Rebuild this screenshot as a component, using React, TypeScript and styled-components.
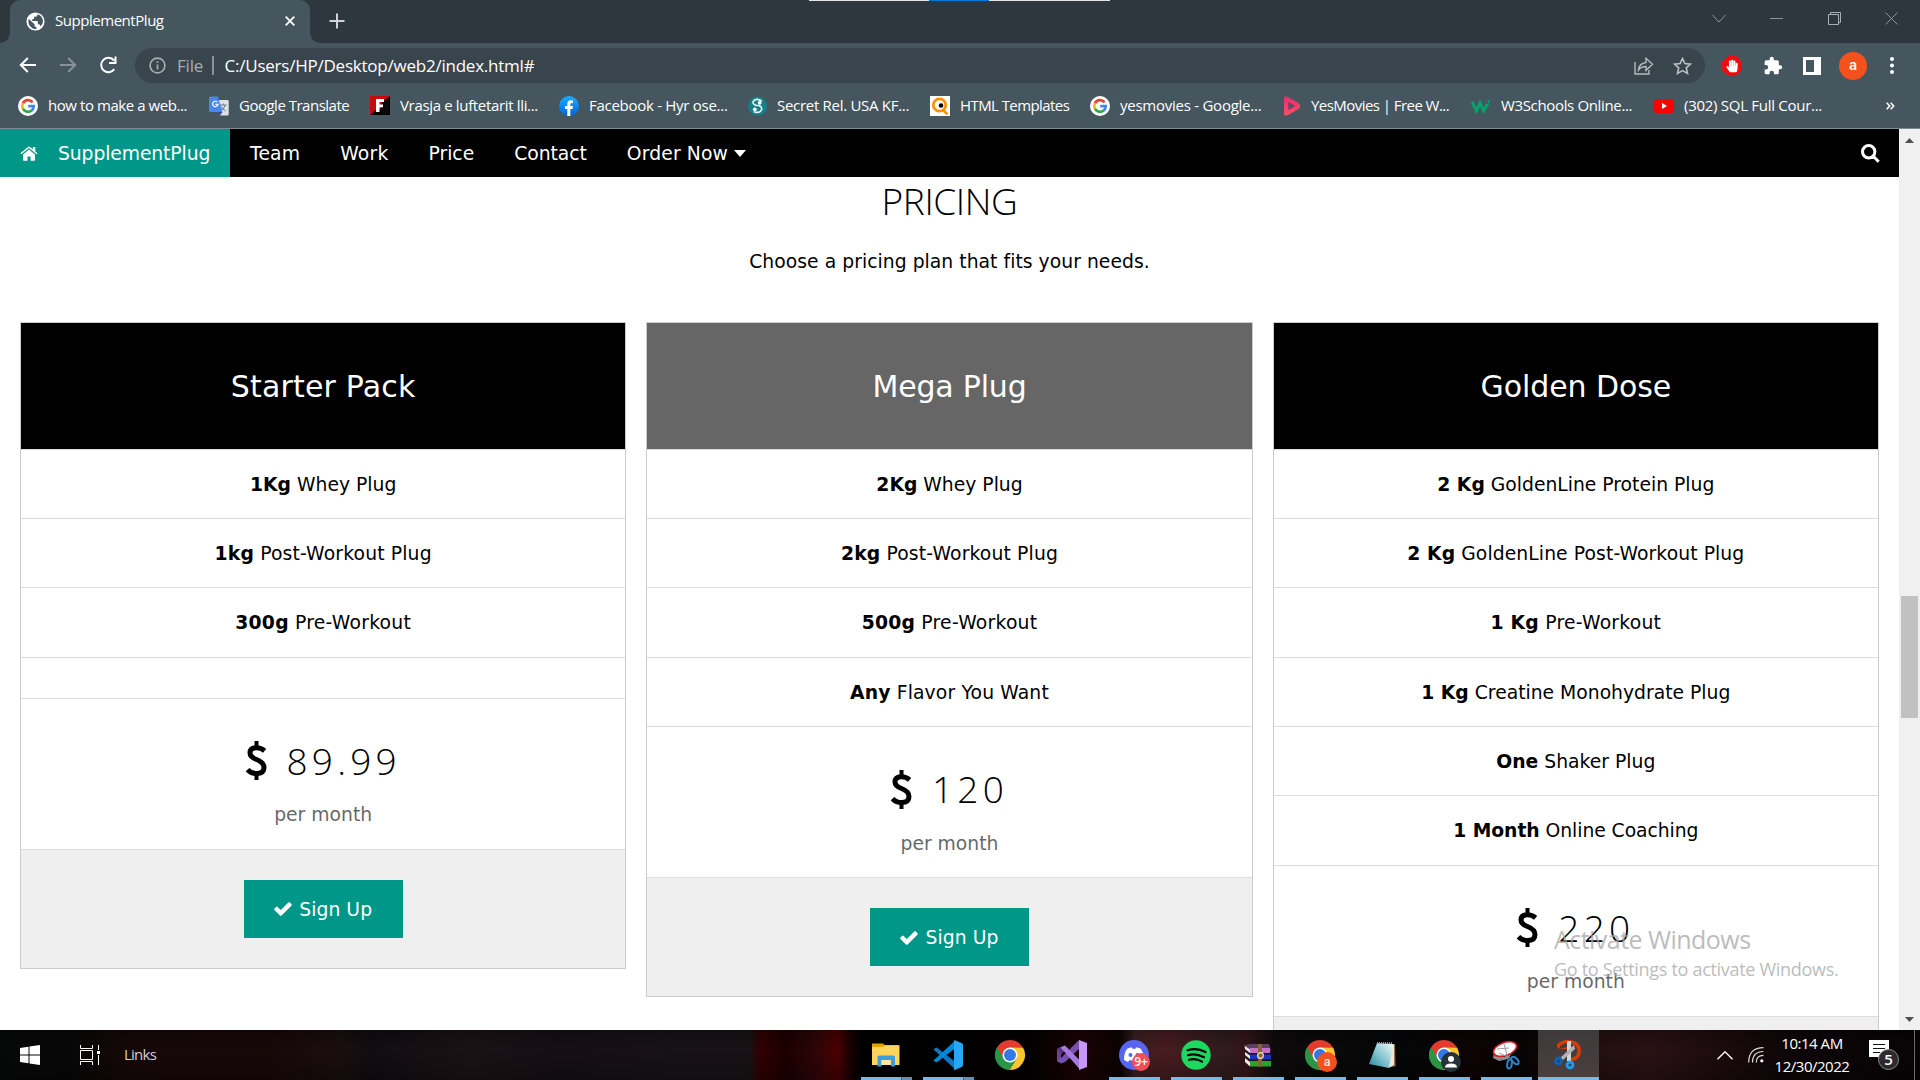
import React from "react";
import styled, { createGlobalStyle } from "styled-components";
import { FaHandPaper } from "react-icons/fa";

const ui = '"Open Sans", "Noto Sans", sans-serif';
const page = '"DejaVu Sans", "Liberation Sans", sans-serif';

const GlobalStyle = createGlobalStyle`
  * { box-sizing: border-box; }
  body { margin: 0; overflow: hidden; background: #fff; font-family: ${ui}; }
  svg { display: block; flex: none; }
`;

const Screen = styled.div`
  position: relative;
  width: 1920px;
  height: 1080px;
  display: flex;
  flex-direction: column;
  overflow: hidden;
`;

/* ---------- browser chrome ---------- */
const TabStrip = styled.div`
  position: relative;
  height: 43px;
  background: #2d373d;
  display: flex;
  flex: none;
`;
const CaptureHint = styled.div`
  position: absolute;
  left: 809px;
  top: 0;
  width: 301px;
  height: 1px;
  background: linear-gradient(90deg, #e3e3e3 120px, #0078d7 120px 180px, #e3e3e3 180px);
`;
const Tab = styled.div`
  position: relative;
  margin-left: 10px;
  width: 300px;
  background: #45565f;
  border-radius: 10px 10px 0 0;
  display: flex;
  align-items: center;
  padding: 0 15px 1px 16px;
  &::before, &::after {
    content: "";
    position: absolute;
    bottom: 0;
    width: 10px;
    height: 10px;
  }
  &::before { left: -10px; background: radial-gradient(circle at 0 0, transparent 9.5px, #45565f 10px); }
  &::after { right: -10px; background: radial-gradient(circle at 100% 0, transparent 9.5px, #45565f 10px); }
`;
const TabTitle = styled.span`
  flex: 1;
  margin-left: 10px;
  padding-bottom: 2px;
  color: #fff;
  font-size: 15px;
  line-height: 20px;
  letter-spacing: -0.46px;
`;
const NewTab = styled.div`
  margin-left: 19px;
  padding-bottom: 1px;
  display: flex;
  align-items: center;
`;
const WindowButtons = styled.div`
  margin-left: auto;
  display: flex;
  height: 37px;
  align-items: center;
`;
const WindowButton = styled.div`
  width: 57.3px;
  display: flex;
  justify-content: center;
`;
const Toolbar = styled.div`
  height: 45px;
  background: #45565f;
  display: flex;
  align-items: center;
  padding: 0 22px 0 19px;
  flex: none;
`;
const NavIcons = styled.div`
  display: flex;
  gap: 22px;
  width: 116px;
  padding-bottom: 1px;
  align-items: center;
`;
const AddressBar = styled.div`
  width: 1570px;
  height: 35px;
  border-radius: 18px;
  background: #39454c;
  display: flex;
  align-items: center;
  padding: 0 13px 0 14px;
  font-size: 17px;
  line-height: 24px;
  color: #fff;
`;
const Scheme = styled.span`
  margin-left: 11px;
  width: 35px;
  color: #a6adb1;
  letter-spacing: -0.2px;
`;
const Divider = styled.i`
  width: 1.5px;
  height: 19px;
  background: #87929a;
  margin-right: 11px;
`;
const Url = styled.span`
  flex: 1;
  letter-spacing: -0.23px;
`;
const AddressActions = styled.div`
  display: flex;
  gap: 19px;
  align-items: center;
`;
const Extensions = styled.div`
  margin-left: 17px;
  display: flex;
  align-items: center;
  flex: 1;
`;
const ExtSlot = styled.div<{ $w: number }>`
  width: ${(p) => p.$w}px;
  display: flex;
`;
const Avatar = styled.div`
  width: 28px;
  height: 28px;
  border-radius: 50%;
  background: #f4511e;
  color: #fff;
  font: 500 15px/27px Roboto, sans-serif;
  text-align: center;
`;
const Bookmarks = styled.div`
  height: 41px;
  background: #45565f;
  border-bottom: 1px solid #7f8b92;
  display: flex;
  align-items: center;
  padding: 0 25px 5px 18px;
  color: #fff;
  font-size: 15px;
  line-height: 20px;
  flex: none;
`;
const Bookmark = styled.div<{ $w: number; $ls: number }>`
  width: ${(p) => p.$w}px;
  display: flex;
  align-items: center;
  gap: 10px;
  white-space: nowrap;
  letter-spacing: ${(p) => p.$ls}px;
`;
const BookmarkText = styled.span`
  padding-bottom: 2px;
`;
const More = styled.span`
  margin-left: auto;
  display: flex;
`;

/* ---------- page ---------- */
const Viewport = styled.div`
  height: 901px;
  display: flex;
  overflow: hidden;
  flex: none;
  font-family: ${page};
`;
const Page = styled.main`
  width: 1899px;
  background: #fff;
`;
const SiteNav = styled.nav`
  height: 48px;
  background: #000;
  display: flex;
  align-items: center;
  color: #fff;
  font-size: 18.75px;
  line-height: 28px;
  padding-right: 19px;
`;
const Brand = styled.a`
  width: 230px;
  height: 48px;
  background: #009688;
  display: flex;
  align-items: center;
  gap: 20px;
  padding-left: 20px;
  letter-spacing: -0.1px;
`;
const NavText = styled.span`
  padding-top: 2px;
`;
const NavLink = styled.a<{ $ls?: number }>`
  display: flex;
  align-items: center;
  gap: 6px;
  padding: 0 20px;
  letter-spacing: ${(p) => p.$ls ?? 0}px;
`;
const Search = styled.div`
  margin-left: auto;
`;
const Section = styled.section`
  text-align: center;
  padding: 0 20px;
`;
const Heading = styled.h2`
  margin: 0;
  padding-top: 1px;
  font: 350 37px/46px ${ui};
  letter-spacing: -0.4px;
`;
const Lead = styled.p`
  margin: 23.5px 0 46.5px;
  font-size: 18.75px;
  line-height: 28px;
  letter-spacing: 0.04px;
`;
const Plans = styled.div`
  display: grid;
  grid-template-columns: repeat(3, 1fr);
  gap: 20px;
  align-items: start;
`;
const Plan = styled.ul`
  list-style: none;
  margin: 0;
  padding: 0;
  border: 1px solid #ccc;
`;
const PlanTitle = styled.li<{ $bg: string; $ls: number }>`
  height: 126.62px;
  padding-top: 2px;
  display: flex;
  align-items: center;
  justify-content: center;
  background: ${(p) => p.$bg};
  border-bottom: 1px solid #ddd;
  color: #fff;
  font-size: 30px;
  letter-spacing: ${(p) => p.$ls}px;
`;
const Feature = styled.li<{ $empty?: boolean; $ls?: number }>`
  height: ${(p) => (p.$empty ? 41.25 : 69.375)}px;
  line-height: 70.4px;
  border-bottom: 1px solid #ddd;
  font-size: 18.75px;
  letter-spacing: ${(p) => p.$ls ?? 0}px;
`;
const PriceItem = styled.li`
  height: 151px;
  padding-top: 35px;
  border-bottom: 1px solid #ddd;
`;
const Price = styled.h2`
  margin: 0 0 13.5px;
  display: flex;
  justify-content: center;
  align-items: center;
  gap: 20px;
  font: 350 37px/54px ${ui};
  letter-spacing: 4.2px;
`;
const Period = styled.div`
  color: #000;
  opacity: 0.6;
  font-size: 18.75px;
  line-height: 28px;
`;
const PlanFooter = styled.li`
  height: 118px;
  padding-top: 30px;
  background: #efefef;
  display: flex;
  justify-content: center;
  align-items: flex-start;
`;
const SignUp = styled.a`
  width: 159px;
  height: 58px;
  background: #009688;
  color: #fff;
  display: flex;
  align-items: center;
  justify-content: center;
  gap: 7px;
  padding-top: 1px;
  font-size: 18.75px;
  letter-spacing: 0.07px;
`;
const Scrollbar = styled.div`
  width: 21px;
  background: #f0f0f0;
  display: flex;
  flex-direction: column;
  align-items: center;
  justify-content: space-between;
  padding: 9px 0 8px;
`;
const Thumb = styled.div`
  width: 17px;
  height: 122px;
  margin-top: 313px;
  margin-bottom: 159px;
  background: #c1c1c1;
`;
const Watermark = styled.div`
  position: absolute;
  left: 1554px;
  top: 921px;
  color: rgba(165, 165, 165, 0.75);
  white-space: nowrap;
`;
const WatermarkTitle = styled.div`
  font-size: 25px;
  line-height: 36px;
  letter-spacing: -0.54px;
`;
const WatermarkText = styled.div`
  font-size: 18px;
  line-height: 25px;
  letter-spacing: -0.3px;
`;

/* ---------- taskbar ---------- */
const Taskbar = styled.div`
  position: relative;
  height: 50px;
  flex: none;
  display: flex;
  color: #fff;
  background:
    linear-gradient(180deg, rgba(0, 0, 0, 0.25), transparent 40%, rgba(0, 0, 0, 0.25)),
    linear-gradient(90deg, #070808 0, #080707 70px, #160808 130px, #170808 270px, #1a0e10 340px,
      #100d10 370px, #1b1215 470px, #150f13 560px, #171216 680px, #181216 750px, #330002 760px,
      #1c0000 785px, #2e0507 815px, #4c0003 838px, #1a0001 850px, #000 862px, #020000 1030px,
      #1c0204 1080px, #0b0203 1120px, #3c2022 1135px, #491c20 1165px, #301c1f 1225px, #35151a 1245px,
      #0d0b0c 1275px, #050607 1400px, #0d0204 1480px, #050303 1520px, #24100f 1600px, #2a1114 1650px,
      #1c0b0d 1720px, #0d0607 1790px, #080405 1920px);
`;
const TaskLeft = styled.div`
  width: 856px;
  display: flex;
  align-items: center;
  padding-left: 20px;
`;
const Links = styled.span`
  margin-left: 24px;
  padding-bottom: 2px;
  color: #d4d0d0;
  font-size: 15px;
  letter-spacing: -0.75px;
`;
const TaskApps = styled.div`
  display: flex;
  gap: 1px;
`;
const TaskApp = styled.div<{ $active?: boolean }>`
  position: relative;
  width: 61px;
  height: 50px;
  display: flex;
  align-items: center;
  justify-content: center;
  padding-right: 2px;
  background: ${(p) => (p.$active ? "linear-gradient(#3d3a3b, #4c3e3f)" : "none")};
`;
const Running = styled.i<{ $wide?: boolean; $stacked?: boolean }>`
  position: absolute;
  bottom: 0;
  left: ${(p) => (p.$wide ? 0 : 5)}px;
  right: ${(p) => (p.$wide ? 0 : 5)}px;
  height: 3px;
  background: ${(p) => (p.$stacked ? "linear-gradient(90deg, #76b9ed 40px, #41627d 40px 41px, #5e92bd 41px)" : "#76b9ed")};
`;
const Tray = styled.div`
  flex: 1;
  display: flex;
  align-items: center;
  padding-left: 118px;
`;
const Clock = styled.div`
  width: 78px;
  margin-left: 9px;
  padding-bottom: 1px;
  text-align: center;
  font-size: 15px;
  line-height: 23px;
  letter-spacing: -0.48px;
`;
const Notifications = styled.div`
  position: relative;
  margin-left: 18px;
  width: 30px;
  height: 30px;
`;
const Count = styled.span`
  position: absolute;
  left: 9px;
  top: 9px;
  width: 21px;
  height: 21px;
  border-radius: 50%;
  border: 1px solid #8a8a8a;
  background: #2b2b2b;
  font: 600 15px/18px ${ui};
  text-align: center;
`;
const DesktopEdge = styled.i`
  margin-left: 15px;
  width: 1px;
  height: 50px;
  background: #6d6768;
`;

/* ---------- drawings ---------- */
const Line = ({ w, h, d, c = "#fff", s = 2, vb }: { w: number; h: number; d: string; c?: string; s?: number; vb?: string }) => (
  <svg width={w} height={h} viewBox={vb ?? `0 0 ${w} ${h}`} fill="none" stroke={c} strokeWidth={s}><path d={d} /></svg>
);
const Shape = ({ w, h, d, c = "#fff", vb }: { w: number; h: number; d: string; c?: string; vb?: string }) => (
  <svg width={w} height={h} viewBox={vb ?? `0 0 ${w} ${h}`} fill={c}><path d={d} /></svg>
);
const HomeIcon = () => (
  <svg width="18" height="15" viewBox="0 0 18 15" fill="#fff">
    <path d="M9 3.6 3 8.6V14q0 .7.7.7h3.8v-4.2h3v4.2h3.8q.7 0 .7-.7V8.6z" />
    <path d="m17.6 7.3-2.3-1.9V1h-2.4v2.3L10 .9Q9 .1 8 .9L.4 7.3l.9 1L9 1.9l7.7 6.4z" />
  </svg>
);
const SearchIcon = () => <Line w={19} h={19} s={3} d="M7.7 1.6a6.2 6.2 0 1 0 0 12.4 6.2 6.2 0 0 0 0-12.4M12.3 12.3l5.4 5.4" />;
const CheckIcon = () => <Shape w={18} h={14} d="M17.4 3.7 7.6 13.4q-.8.7-1.6 0L.5 8q-.7-.8 0-1.6L2 4.9q.8-.6 1.6 0l3.2 3.2L14.3.6q.8-.7 1.6 0l1.5 1.5q.6.8 0 1.6z" />;
const DollarIcon = () => (
  <svg width="21" height="39" viewBox="0 0 21 39" fill="none" stroke="#000">
    <path d="M18.600 9.800Q15 6.800 10.500 6.800 4 6.800 4 12q0 4 6.500 6.500 7.500 3 7.500 8 0 6-7.500 6Q5 32.500 1.500 28.600" strokeWidth="5" />
    <path d="M10.500 0v7M10.500 32v7" strokeWidth="4" />
  </svg>
);

const Globe = () => (
  <svg width="19" height="19" viewBox="0 0 20 20">
    <circle cx="10" cy="10" r="9.5" fill="#fff" />
    <path d="M3 7.3 9 13v2l2 1v2a8 8 0 0 1-8-10.700M12 2.300v1.200q0 1.500-2 1.500H8.500v2L6.500 8v1.500h5q1 0 1 1V13h1.500l1.500 2A7.500 7.500 0 0 0 12 2.300" fill="#45565f" />
  </svg>
);
const GoogleG = () => (
  <svg width="20" height="20" viewBox="0 0 20 20">
    <circle cx="10" cy="10" r="10" fill="#fff" />
    <g fill="none" strokeWidth="2.700">
      <path d="M14.600 6.400A5.800 5.800 0 0 0 4.900 7.300" stroke="#ea4335" />
      <path d="M4.900 7.300a5.800 5.800 0 0 0 0 5.400" stroke="#fbbc05" />
      <path d="M4.900 12.700a5.800 5.800 0 0 0 8.900 1.700" stroke="#34a853" />
      <path d="M13.800 14.400a5.800 5.800 0 0 0 2-4.200H10.200" stroke="#4285f4" />
    </g>
  </svg>
);
const Translate = () => (
  <svg width="20" height="20" viewBox="0 0 20 20">
    <path d="M8 4h10.500q1.200 0 1.200 1.200v13q0 1.300-1.200 1.300H11z" fill="#dfe1e3" />
    <path d="M11 9h6.500M14.200 7.500V9m2 0q-1 4-4.200 5.500M12.200 10.500q1.500 3 4.500 4.500" stroke="#5d7d92" fill="none" />
    <path d="M1.300.5h7.500L13.500 16H1.300Q0 16 0 14.700V1.800Q0 .5 1.300.5" fill="#4a86f0" />
    <path d="m9.800 16h3.700l-2.500 3.500z" fill="#3049ad" />
    <path d="M8.400 6.200a2.700 2.700 0 1 0 .6 2.200H6.300" fill="none" stroke="#fff" strokeWidth="1.200" />
  </svg>
);
const FIcon = () => (
  <svg width="20" height="19" viewBox="0 0 20 19">
    <path d="M0 0h20v19H0z" /><path d="M0 0h20l-4 4-6 9-10 6z" fill="#c90910" /><path d="M1 18 8 12v6zM12 6l7-5v17h-8z" fill="#080808" />
    <path d="M6 3h8v3H9.500v2.500H13v2.800H9.500V16H6z" fill="#fff" />
  </svg>
);
const Facebook = () => (
  <svg width="20" height="20" viewBox="0 0 20 20">
    <defs><linearGradient id="fb" x2="0" y2="1"><stop stopColor="#19aeff" /><stop offset="1" stopColor="#0062e0" /></linearGradient></defs>
    <circle cx="10" cy="10" r="10" fill="url(#fb)" />
    <path d="M8.300 20v-7H6V10h2.300V8q0-3.800 3.700-3.800l2 .2V7h-1.200q-1.500 0-1.500 1.400V10H14l-.5 3h-2.200v7z" fill="#fff" />
  </svg>
);
const SIcon = () => (
  <svg width="19" height="20" viewBox="0 0 20 20">
    <circle cx="10" cy="10" r="10" fill="#167f88" />
    <path d="M14.500 5Q10 1.500 6.500 4.200T8.500 9.500h3q4 1.500 2.500 5T6 16" fill="none" stroke="#eaf6f6" strokeWidth="1.700" />
    <circle cx="12.300" cy="6.700" r="2" fill="#fff" /><circle cx="7.200" cy="13.500" r="2" fill="#fff" />
  </svg>
);
const QIcon = () => (
  <svg width="20" height="20" viewBox="0 0 20 20">
    <path d="M0 0h20v20H0z" fill="#fff" /><circle cx="9.500" cy="9" r="6.200" fill="none" stroke="#ff9100" strokeWidth="2.800" />
    <path d="m12 15 2-2 4.500 4.500-2 1.500z" fill="#ff9100" /><circle cx="11" cy="9.500" r="2.300" />
  </svg>
);
const YesIcon = () => (
  <svg width="17" height="20" viewBox="0 0 17 20">
    <defs><linearGradient id="ym" x2="0" y2="1"><stop stopColor="#e52e71" /><stop offset="1" stopColor="#ff4f63" /></linearGradient></defs>
    <path d="M0 1.500Q1.500-.5 4 1l10.500 6q3.500 3 0 6L4 19q-3 1.500-4-.500z" fill="url(#ym)" />
    <path d="M4.500 6.200 11 10l-6.500 3.800z" fill="#45565f" stroke="#b03562" />
  </svg>
);
const W3Icon = () => (
  <svg width="20" height="20" viewBox="0 0 20 20" fill="none" stroke="#04a46c">
    <path d="m1 6 4.500 9L9 7l3.500 8 4-7" strokeWidth="3" /><path d="M15.800 4.200h2.700L17 6q2 .2 1.500 1.800T15.800 8" strokeWidth="1" />
  </svg>
);
const YouTube = () => (
  <svg width="20" height="14" viewBox="0 0 20 14"><rect width="20" height="14" rx="3" fill="#f00" /><path d="m8 4 5 3-5 3z" fill="#fff" /></svg>
);
const Abp = () => (
  <svg width="20" height="20" viewBox="0 0 20 20">
    <path d="M6 0h8l6 6v8l-6 6H6l-6-6V6z" fill="#ed0c12" />
    <FaHandPaper size={13} x={3.500} y={3.500} color="#fff" />
  </svg>
);
const Chrome = ({ badge }: { badge?: "letter" | "person" }) => (
  <svg width="34" height="34" viewBox="-17 -17 34 34" style={{ overflow: "visible" }}>
    <path d="M0 0-13-7.500A15 15 0 0 1 13-7.500L0-7z" fill="#e33b2e" />
    <path d="M-13-7.500A15 15 0 0 0-.5 15L6.200 3.500 0 0z" fill="#2b9447" />
    <path d="M13-7.500A15 15 0 0 1-.5 15L6.500 3.500 0-7.500z" fill="#fcc72e" />
    <path d="M-13-7.500-6 4 0-7.500z" fill="#e33b2e" /><path d="M-13-7.500-6.300 4l6.300 3L6 4-.5 15A15 15 0 0 1-13-7.500" fill="#2b9447" />
    <circle r="7.500" fill="#fff" /><circle r="6" fill="#3478e8" />
    {badge === "letter" && (<><circle cx="7" cy="7" r="10" fill="#f4511e" /><text x="7" y="11" fill="#ffe5dc" textAnchor="middle" fontSize="12.500" fontFamily="Roboto, sans-serif" fontWeight="500">a</text></>)}
    {badge === "person" && (<><circle cx="7" cy="7" r="10" fill="#263238" /><circle cx="7" cy="4" r="3" fill="#fff" /><path d="M1 12.500q0-4 6-4t6 4z" fill="#fff" /></>)}
  </svg>
);
const Folder = () => (
  <svg width="28" height="24" viewBox="0 0 28 24">
    <path d="M0 .500h11l2 1.700h14v5H0z" fill="#e5a100" /><path d="M0 4h11l2-1.800h14.500V22H0z" fill="#ffd45c" />
    <path d="M5.500 23.500V14q0-1.500 1.500-1.500h14.500q1.500 0 1.500 1.500v9.500h-4V17H9.500v6.500z" fill="#3f9ddd" /><path d="M9.500 17h9v5h-9z" fill="#fbe5a3" />
  </svg>
);
const VsCode = () => (
  <svg width="30" height="30" viewBox="0 0 30 30">
    <path d="m.5 9.500 2-1.700q.7-.5 1.500 0L22.500 22v7.500Z" fill="#0a78c2" /><path d="M.5 20.500 22.500.3V8L4 22q-.8.600-1.500 0L.5 20.500z" fill="#0089d6" />
    <path d="M22 .2 28.500 3q1.500.7 1.500 2v20q0 1.300-1.500 2L22 30q-1 0-1-1V1q0-.800 1-.800" fill="#27a6f2" />
  </svg>
);
const VisualStudio = () => (
  <svg width="30" height="30" viewBox="0 0 30 30">
    <path d="M0 9 4 7v16l-4-2z" fill="#6b4596" /><path d="m0 21 4-3 18-18v9L8 22l-4 1.500z" fill="#7550ad" />
    <path d="m0 9 4-2 4 3-4 5z" fill="#59367f" />
    <path d="m4 7 4-1.500 15 15v9L4 8z" fill="#a779df" /><path d="m22 0 8 3v24l-8 3z" fill="#c996fa" />
  </svg>
);
const Discord = () => (
  <svg width="30" height="30" viewBox="0 0 30 30" style={{ overflow: "visible" }}>
    <circle cx="15" cy="15" r="15" fill="#5865f2" />
    <path d="M5 20q0-8 3.500-11.500l4-1.200 1 1.500h3l1-1.500 4 1.200Q25 13 25 20l-4 2-1.500-2q-4.500 1.300-9 0L9 22z" fill="#fff" />
    <circle cx="11.500" cy="15" r="2" fill="#5865f2" /><circle cx="18.500" cy="15" r="2" fill="#5865f2" />
    <circle cx="22" cy="22" r="9" fill="#ed4f55" /><text x="22" y="26" textAnchor="middle" fontFamily='"Open Sans", sans-serif' fontSize="12" fontWeight="600" fill="#fff">9+</text>
  </svg>
);
const Spotify = () => (
  <svg width="30" height="30" viewBox="0 0 30 30">
    <circle cx="15" cy="15" r="14.700" fill="#1ed760" />
    <path d="M6.500 10.300Q16 7.500 24.500 12M7 15.200q8-2.200 16 2M8 19.800q7-1.800 13 1.800" fill="none" stroke="#000" strokeLinecap="round" strokeWidth="2.200" />
  </svg>
);
const WinRar = () => (
  <svg width="28" height="23" viewBox="0 0 28 23">
    <path d="M1 1 7 0h18l2 7H6zM0 1l6 5v2L0 4z" fill="#59425f" /><path d="M6 4h20v5H6z" fill="#c86fc4" /><path d="M6 10.500h21v5H6z" fill="#1b2fc0" /><path d="M6 17h21v5.500H6z" fill="#27a529" />
    <path d="m1 2 5 3.500V9L1 5zM1 8l5 3.500V15l-5-4zM1 14l5 4v4.500L1 18z" fill="#e8e8e8" />
    <path d="M14 0h4v22.500h-4z" fill="#8b6232" /><circle cx="16.500" cy="11.500" r="2.800" fill="none" stroke="#ddd0a6" strokeWidth="1.500" />
  </svg>
);
const Notepad = () => (
  <svg width="28" height="28" viewBox="0 0 28 28">
    <defs><linearGradient id="np" x1="1" x2="0" y2="1"><stop stopColor="#f1fafa" /><stop offset=".55" stopColor="#7fc0cc" /><stop offset="1" stopColor="#248698" /></linearGradient></defs>
    <path d="M24 3h3l.5 22-8 2z" fill="#9a7442" /><path d="m24 3 2 1v20l-6 3z" fill="#e8e8e2" /><path d="M9 2 25 3l-4 24L1 23z" fill="url(#np)" />
    <path d="M9 2h15" stroke="#999" strokeWidth="2" strokeDasharray="1 1" />
  </svg>
);
const Snipping = () => (
  <svg width="28" height="30" viewBox="0 0 28 30">
    <path d="M2 13q8 8 18 0l-4 6-9 2-6-3z" fill="#8f8f8f" /><ellipse cx="13" cy="9" rx="12" ry="6.500" transform="rotate(-20 13 9)" fill="#fff" stroke="#d42020" strokeWidth="1.600" />
    <path d="m12 4 4 14M7 13l11 5M5 9l12-1" stroke="#999" />
    <g fill="none" stroke="#2488c9" strokeWidth="2"><ellipse cx="17.500" cy="24" rx="2.300" ry="4.500" transform="rotate(10 17.500 24)" /><ellipse cx="23" cy="20.500" rx="2.500" ry="4.500" transform="rotate(-45 23 20.500)" /></g>
  </svg>
);
const SnipSketch = () => (
  <svg width="28" height="30" viewBox="0 0 28 30">
    <path d="M6 4Q12 0 19 2.500T25 12q0 7-9 7.500" fill="none" stroke="#d83b01" strokeWidth="3.500" /><path d="M6 2q-6 3-1 7l2-4zM5 9 17 6l5 3" fill="#d83b01" />
    <path d="M13 1h4v20h-4z" fill="#d4d4d4" /><path d="m20 5 1 4L9 20l-3-2z" fill="#b2b2b2" />
    <circle cx="4.500" cy="21" r="3" fill="none" stroke="#0a63bb" strokeWidth="2.800" /><circle cx="16" cy="25" r="3" fill="none" stroke="#1d9cf0" strokeWidth="2.800" />
  </svg>
);

/* ---------- data ---------- */
const bookmarks = [
  { icon: <GoogleG />, text: "how to make a web...", w: 191, ls: -0.44 },
  { icon: <Translate />, text: "Google Translate", w: 161, ls: -0.5 },
  { icon: <FIcon />, text: "Vrasja e luftetarit lli...", w: 189, ls: -0.34 },
  { icon: <Facebook />, text: "Facebook - Hyr ose...", w: 189, ls: -0.28 },
  { icon: <SIcon />, text: "Secret Rel. USA KF...", w: 182, ls: -0.29 },
  { icon: <QIcon />, text: "HTML Templates", w: 160, ls: -0.58 },
  { icon: <GoogleG />, text: "yesmovies - Google...", w: 194, ls: -0.25 },
  { icon: <YesIcon />, text: "YesMovies | Free W...", w: 187, ls: -0.55 },
  { icon: <W3Icon />, text: "W3Schools Online...", w: 183, ls: -0.35 },
  { icon: <YouTube />, text: "(302) SQL Full Cour...", w: 180, ls: -0.28 },
];

const plans = [
  {
    name: "Starter Pack", bg: "#000", ls: 0.18, price: "89.99",
    items: [["1Kg", "Whey Plug"], ["1kg", "Post-Workout Plug"], ["300g", "Pre-Workout"], []],
  },
  {
    name: "Mega Plug", bg: "#666", ls: -0.2, price: "120",
    items: [["2Kg", "Whey Plug"], ["2kg", "Post-Workout Plug"], ["500g", "Pre-Workout"], ["Any", "Flavor You Want"]],
  },
  {
    name: "Golden Dose", bg: "#000", ls: -0.08, price: "220",
    items: [["2 Kg", "GoldenLine Protein Plug"], ["2 Kg", "GoldenLine Post-Workout Plug"], ["1 Kg", "Pre-Workout"],
      ["1 Kg", "Creatine Monohydrate Plug"], ["One", "Shaker Plug"], ["1 Month", "Online Coaching"]],
  },
];

const labelSpacing: Record<string, number> = {
  "Post-Workout Plug": 0.15,
  "Pre-Workout": 0.24,
  "Flavor You Want": 0.14,
  "GoldenLine Post-Workout Plug": 0.09,
  "Online Coaching": -0.05,
};

const apps: { icon: React.ReactNode; run?: boolean; stacked?: boolean; active?: boolean }[] = [
  { icon: <Folder />, run: true, stacked: true },
  { icon: <VsCode />, run: true, stacked: true },
  { icon: <Chrome /> },
  { icon: <VisualStudio /> },
  { icon: <Discord />, run: true },
  { icon: <Spotify />, run: true },
  { icon: <WinRar />, run: true },
  { icon: <Chrome badge="letter" />, run: true },
  { icon: <Notepad />, run: true },
  { icon: <Chrome badge="person" />, run: true },
  { icon: <Snipping />, run: true },
  { icon: <SnipSketch />, run: true, active: true },
];

export default function App() {
  return (
    <Screen>
      <GlobalStyle />
      <TabStrip>
        <Tab>
          <Globe />
          <TabTitle>SupplementPlug</TabTitle>
          <Line w={10} h={10} d="m.7.700 8.600 8.600M9.300.700.7 9.300" s={1.8} />
        </Tab>
        <NewTab><Line w={16} h={16} d="M8 .500v15M.500 8h15" c="#cfd3d5" /></NewTab>
        <CaptureHint />
        <WindowButtons>
          <WindowButton><Line w={14} h={9} d="m.5 1 6.500 7 6.500-7" c="#8c9498" s={1} /></WindowButton>
          <WindowButton><Line w={13} h={1} d="M0 .500h13" c="#8c9498" /></WindowButton>
          <WindowButton><Line w={13} h={13} d="M.5 2.500h10v10H.5zM2.500 2.500v-2h10v10h-2" c="#a9afb2" s={1} /></WindowButton>
          <WindowButton><Line w={13} h={13} d="m.5.500 12 12m0-12-12 12" c="#8c9498" s={1} /></WindowButton>
        </WindowButtons>
      </TabStrip>
      <Toolbar>
        <NavIcons>
          <Line w={18} h={16} d="M17 8H2m6.800-7L1.800 8l7 7" />
          <Line w={18} h={16} d="M1 8h15M9.200 1l7 7-7 7" c="#87929a" />
          <Line w={18} h={18} d="M15.300 13.200A7.200 7.200 0 1 1 15 4.500M16.500.500v6.500H10" />
        </NavIcons>
        <AddressBar>
          <Line w={17} h={17} d="M8.500 1.100a7.400 7.400 0 1 0 0 14.800 7.400 7.400 0 0 0 0-14.800M8.500 7.500v5M8.500 4.200V6" c="#a6adb1" s={1.7} />
          <Scheme>File</Scheme>
          <Divider />
          <Url>C:/Users/HP/Desktop/web2/index.html#</Url>
          <AddressActions>
            <Line w={20} h={18} d="M1 5v12h14v-4M4.500 13Q5 6.500 12 5.500V1.300l6.500 6-6.500 6V9.500Q7 9.500 4.500 13z" c="#b4babd" s={1.4} />
            <Line w={19} h={18} d="m9.500 1.500 2.400 5.100 5.500.600-4.100 3.700 1.200 5.500-5-2.800-5 2.800 1.200-5.500L1.600 7.200l5.500-.600z" c="#b9bfc2" s={1.600} />
          </AddressActions>
        </AddressBar>
        <Extensions>
          <ExtSlot $w={41}><Abp /></ExtSlot>
          <ExtSlot $w={40}>
            <Shape w={20} h={20} vb="0 0 24 24" d="M20.500 11H19V7q0-2-2-2h-4V3.500a2.500 2.500 0 0 0-5 0V5H4Q2 5 2 7v3.800h1.500a2.700 2.700 0 0 1 0 5.400H2V20q0 2 2 2h3.800v-1.500a2.700 2.700 0 0 1 5.400 0V22H17q2 0 2-2v-4h1.500a2.500 2.500 0 0 0 0-5" />
          </ExtSlot>
          <ExtSlot $w={36}><svg width="18" height="18"><path d="M0 0h18v18H0zM3 3v12h8V3z" fillRule="evenodd" fill="#fff" /></svg></ExtSlot>
          <ExtSlot $w={51}><Avatar>a</Avatar></ExtSlot>
          <svg width="4" height="17" viewBox="0 0 4 17" fill="#fff"><circle cx="2" cy="2" r="2" /><circle cx="2" cy="8.500" r="2" /><circle cx="2" cy="15" r="2" /></svg>
        </Extensions>
      </Toolbar>
      <Bookmarks>
        {bookmarks.map((b) => (
          <Bookmark key={b.text} $w={b.w} $ls={b.ls}>{b.icon}<BookmarkText>{b.text}</BookmarkText></Bookmark>
        ))}
        <More><Line w={9} h={8} d="m.700.700 3 3.300-3 3.300M4.700.700l3 3.300-3 3.300" s={1.600} /></More>
      </Bookmarks>

      <Viewport>
        <Page>
          <SiteNav>
            <Brand><HomeIcon /><NavText>SupplementPlug</NavText></Brand>
            <NavLink $ls={0.15}><NavText>Team</NavText></NavLink>
            <NavLink $ls={0.2}><NavText>Work</NavText></NavLink>
            <NavLink><NavText>Price</NavText></NavLink>
            <NavLink $ls={-0.05}><NavText>Contact</NavText></NavLink>
            <NavLink $ls={0.13}><NavText>Order Now</NavText><Shape w={12} h={7} d="M0 0h12L6 7z" /></NavLink>
            <Search><SearchIcon /></Search>
          </SiteNav>
          <Section>
            <Heading>PRICING</Heading>
            <Lead>Choose a pricing plan that fits your needs.</Lead>
            <Plans>
              {plans.map((p) => (
                <Plan key={p.name}>
                  <PlanTitle $bg={p.bg} $ls={p.ls}>{p.name}</PlanTitle>
                  {p.items.map(([amount, label], i) => (
                    <Feature key={i} $empty={!amount} $ls={labelSpacing[label]}>
                      {amount && <><b>{amount}</b> {label}</>}
                    </Feature>
                  ))}
                  <PriceItem>
                    <Price><DollarIcon /><span>{p.price}</span></Price>
                    <Period>per month</Period>
                  </PriceItem>
                  <PlanFooter><SignUp><CheckIcon />Sign Up</SignUp></PlanFooter>
                </Plan>
              ))}
            </Plans>
          </Section>
        </Page>
        <Scrollbar>
          <Shape w={9} h={5} d="M0 5 4.500 0 9 5z" c="#505050" />
          <Thumb />
          <Shape w={9} h={5} d="M0 0h9L4.500 5z" c="#505050" />
        </Scrollbar>
      </Viewport>

      <Watermark>
        <WatermarkTitle>Activate Windows</WatermarkTitle>
        <WatermarkText>Go to Settings to activate Windows.</WatermarkText>
      </Watermark>

      <Taskbar>
        <TaskLeft>
          <Shape w={20} h={20} d="M0 3l8.500-1.300v7.800H0zM9.500 1.500 20 0v9.500H9.500zM0 10.500h8.500v7.800L0 17zM9.500 10.500H20V20L9.500 18.500z" />
          <svg width="20" height="20" viewBox="0 0 20 20" style={{ marginLeft: 40 }} fill="none" stroke="#fff">
            <path d="M.5 0v3.500h12V0M.5 5.500h12v9H.5zM.5 20v-3.500h12V20M18.500 0v5M18.500 10v10" /><path d="M17 6h3v3h-3z" fill="#fff" stroke="none" />
          </svg>
          <Links>Links</Links>
        </TaskLeft>
        <TaskApps>
          {apps.map((a, i) => (
            <TaskApp key={i} $active={a.active}>
              {a.icon}
              {a.run && <Running $wide={a.active} $stacked={a.stacked} />}
            </TaskApp>
          ))}
        </TaskApps>
        <Tray>
          <Line w={16} h={9} d="m.5 8.300 7.500-7.500 7.500 7.500" s={1.400} />
          <svg width="16" height="16" viewBox="0 0 16 16" style={{ marginLeft: 15 }} fill="none" stroke="#ddd" strokeWidth="1.200">
            <path d="M.700 15.500Q.700.700 15.500.700M4.500 15.500q0-11 11-11M8.300 15.500q0-7.200 7.200-7.200" /><circle cx="13.800" cy="13.800" r="1.600" fill="#fff" stroke="none" />
          </svg>
          <Clock><div>10:14 AM</div><div>12/30/2022</div></Clock>
          <Notifications>
            <svg width="20" height="22" viewBox="0 0 20 22"><path d="M0 0h20v17h-8.500L9.500 20v-3H0z" fill="#fff" /><path d="M4 4.500h12M4 8.500h12M4 12.500h7" stroke="#111" /></svg>
            <Count>5</Count>
          </Notifications>
          <DesktopEdge />
        </Tray>
      </Taskbar>
    </Screen>
  );
}
